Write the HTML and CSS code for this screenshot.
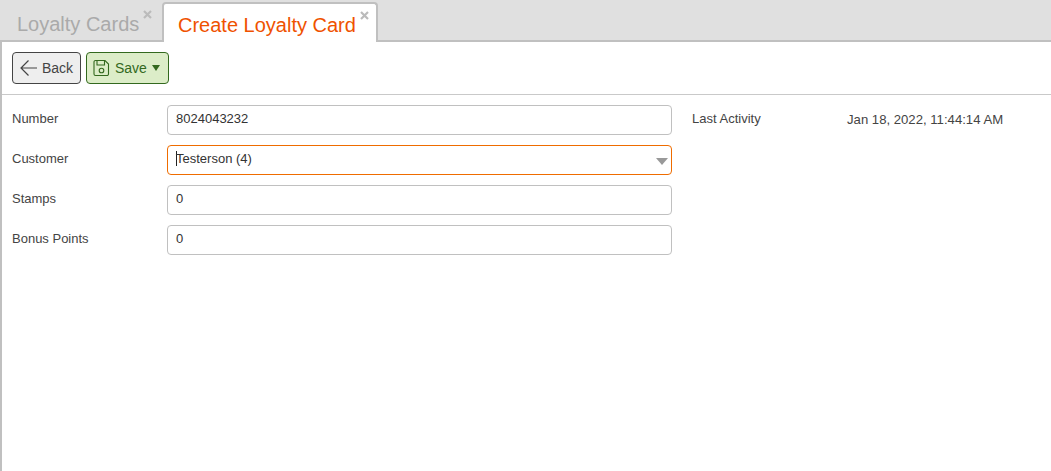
FILE: index.html
```html
<!DOCTYPE html>
<html lang="en">
<head>
<meta charset="utf-8">
<title>Create Loyalty Card</title>
<link rel="stylesheet" href="styles.css">
</head>
<body>
<nav class="tabs">
  <div class="tab"><span class="tab-label">Loyalty Cards</span><svg class="tab-close" width="9" height="9" viewBox="0 0 9 9"><path d="M1 1l7 7M8 1 1 8" stroke="#bbb" stroke-width="2.200" fill="none"/></svg></div>
  <div class="tab tab-active"><span class="tab-label">Create Loyalty Card</span><svg class="tab-close" width="9" height="9" viewBox="0 0 9 9"><path d="M1 1l7 7M8 1 1 8" stroke="#bbb" stroke-width="2.200" fill="none"/></svg></div>
</nav>
<main class="panel">
  <div class="toolbar">
    <button class="btn btn-back" type="button">
      <svg class="icon" width="20" height="18" viewBox="0 0 20 18"><path d="M18 9H2M9.500 1.500 2 9l7.500 7.500" fill="none" stroke="#444" stroke-width="1.200"/></svg>
      <span>Back</span>
    </button>
    <button class="btn btn-save" type="button">
      <svg class="icon" width="17" height="18" viewBox="0 0 17 18"><path d="M2.500 1.500h9.500l3.500 3.500V15a1.500 1.500 0 0 1-1.500 1.500H2.500A1.500 1.500 0 0 1 1 15V3A1.500 1.500 0 0 1 2.500 1.500Z" fill="none" stroke="#33691e" stroke-width="1.100"/><path d="M4 1.500v4.500h7.500v-4.500" fill="none" stroke="#33691e" stroke-width="1.100"/><circle cx="8.500" cy="11.500" r="2.300" fill="none" stroke="#33691e" stroke-width="1.100"/></svg>
      <span>Save</span>
      <span class="caret"></span>
    </button>
  </div>
  <div class="form">
    <div class="fields">
      <div class="row"><span class="label">Number</span><div class="input">8024043232</div></div>
      <div class="row"><span class="label">Customer</span><div class="input input-focus"><span class="cursor"></span>Testerson (4)<span class="select-arrow"></span></div></div>
      <div class="row"><span class="label">Stamps</span><div class="input">0</div></div>
      <div class="row"><span class="label">Bonus Points</span><div class="input">0</div></div>
    </div>
    <div class="side">
      <span class="label side-label">Last Activity</span>
      <span class="side-value">Jan 18, 2022, 11:44:14 AM</span>
    </div>
  </div>
</main>
</body>
</html>
```
FILE: styles.css
```css
* { box-sizing: border-box; }
html, body { height: 100%; }
body {
  margin: 0;
  background: #fff;
  color: #444;
  font-family: "Liberation Sans", Arial, sans-serif;
  font-size: 13px;
  display: flex;
  flex-direction: column;
  overflow: hidden;
}
.tabs {
  height: 42px;
  flex: none;
  display: flex;
  align-items: flex-end;
  background: #e0e0e0;
  border-bottom: 2px solid #c0c0c0;
}
.tab {
  position: relative;
  height: 40px;
  width: 162px;
  padding: 12px 0 0 17px;
  font-size: 20px;
  line-height: 25px;
  color: #aaa;
}
.tab-active {
  width: 216px;
  height: 40px;
  margin-bottom: -2px;
  padding: 9px 0 0 14px;
  background: #fff;
  color: #ef5200;
  border: 2px solid #c0c0c0;
  border-bottom: 0;
  border-radius: 4px 4px 0 0;
}
.tab-close {
  position: absolute;
  top: 10px;
  right: 10px;
}
.tab-active .tab-close { top: 7px; right: 7px; }
.panel {
  flex: 1;
  border-left: 2px solid #c0c0c0;
}
.toolbar {
  height: 53px;
  padding: 10px 0 0 10px;
  display: flex;
  align-items: flex-start;
  gap: 5px;
  border-bottom: 1px solid #c9c9c9;
}
.btn {
  height: 32px;
  display: flex;
  align-items: center;
  margin: 0;
  padding: 0;
  font: 14px "Liberation Sans", Arial, sans-serif;
  border-radius: 4px;
  border: 1px solid #444;
  background: #eee;
  color: #444;
}
.btn-back { width: 69px; padding-left: 6px; gap: 3px; }
.btn-save {
  width: 83px;
  padding-left: 6px;
  gap: 5px;
  border-color: #33691e;
  background: #dcedc8;
  color: #33691e;
}
.icon { flex: none; }
.caret {
  width: 0;
  height: 0;
  border-left: 4px solid transparent;
  border-right: 4px solid transparent;
  border-top: 6px solid #33691e;
}
.form {
  display: flex;
  padding: 10px 0 0 10px;
}
.fields {
  width: 660px;
  display: flex;
  flex-direction: column;
  gap: 10px;
}
.row {
  display: flex;
  align-items: flex-start;
}
.label {
  width: 155px;
  flex: none;
  padding-top: 6px;
  line-height: 16px;
  font-size: 13px;
  color: #444;
}
.input {
  position: relative;
  width: 505px;
  height: 30px;
  padding: 0 8px;
  border: 1px solid #c0c0c0;
  border-radius: 4px;
  font-size: 13px;
  line-height: 26px;
  color: #333;
  background: #fff;
}
.input-focus {
  border-color: #ef6c00;
}
.cursor {
  display: inline-block;
  width: 1px;
  height: 15px;
  margin-right: -1px;
  background: #222;
  vertical-align: -3px;
}
.select-arrow {
  position: absolute;
  right: 3px;
  top: 12px;
  width: 0;
  height: 0;
  border-left: 6px solid transparent;
  border-right: 6px solid transparent;
  border-top: 7px solid #999;
}
.side {
  display: flex;
  padding-left: 20px;
}
.side-value {
  padding-top: 7px;
  line-height: 16px;
  font-size: 13.150px;
  color: #444;
}
```
